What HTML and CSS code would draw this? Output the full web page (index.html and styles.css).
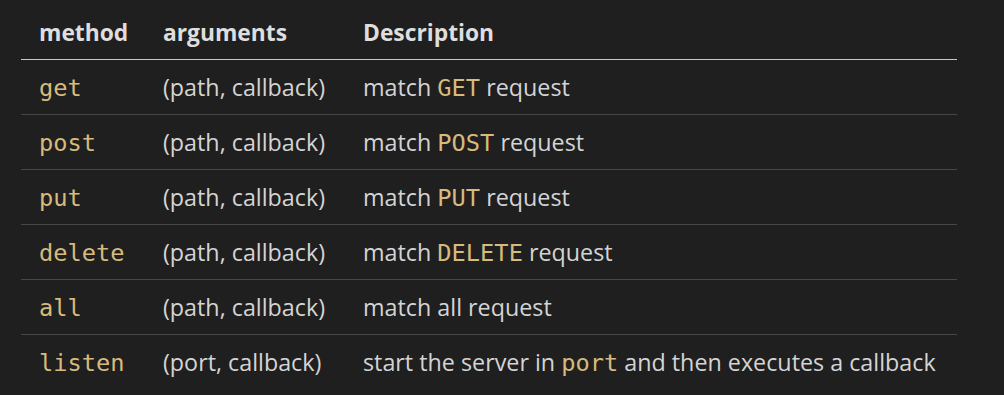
FILE: index.html
```html
<!DOCTYPE html>
<html>
<head>
<meta charset="utf-8">
<link rel="stylesheet" href="styles.css">
</head>
<body>
<table class="api">
  <thead>
    <tr><th class="c1">method</th><th class="c2">arguments</th><th class="c3">Description</th></tr>
  </thead>
  <tbody>
    <tr><td><code>get</code></td><td>(path, callback)</td><td>match <code>GET</code> request</td></tr>
    <tr><td><code>post</code></td><td>(path, callback)</td><td>match <code>POST</code> request</td></tr>
    <tr><td><code>put</code></td><td>(path, callback)</td><td>match <code>PUT</code> request</td></tr>
    <tr><td><code>delete</code></td><td>(path, callback)</td><td>match <code>DELETE</code> request</td></tr>
    <tr><td><code>all</code></td><td>(path, callback)</td><td>match all request</td></tr>
    <tr><td><code>listen</code></td><td>(port, callback)</td><td>start the server in <code>port</code> and then executes a callback</td></tr>
  </tbody>
</table>
</body>
</html>
```
FILE: styles.css
```css
html, body {
  margin: 0;
  padding: 0;
  background: #1f1f1f;
}
body {
  font-family: "Open Sans", "Liberation Sans", sans-serif;
  font-size: 23.3px;
  color: #d4d4d4;
}
.api {
  border-collapse: collapse;
  margin: 5px 0 0 21px;
  width: 936px;
  table-layout: fixed;
}
.c1 { width: 106px; }
.c2 { width: 182px; }
.api th, .api td {
  padding: 0 0 0 18px;
  height: 54px;
  text-align: left;
  vertical-align: middle;
  white-space: nowrap;
}
.api th {
  font-weight: 700;
  font-size: 22.8px;
  color: #dedede;
  border-bottom: 1px solid #c8c8c8;
}
.api tbody tr td {
  border-bottom: 1px solid #464646;
}
.api tbody tr:last-child td {
  border-bottom: none;
}
code {
  font-family: "DejaVu Sans Mono", "Liberation Mono", monospace;
  font-size: 23.7px;
  color: #d7ba7d;
}
```
